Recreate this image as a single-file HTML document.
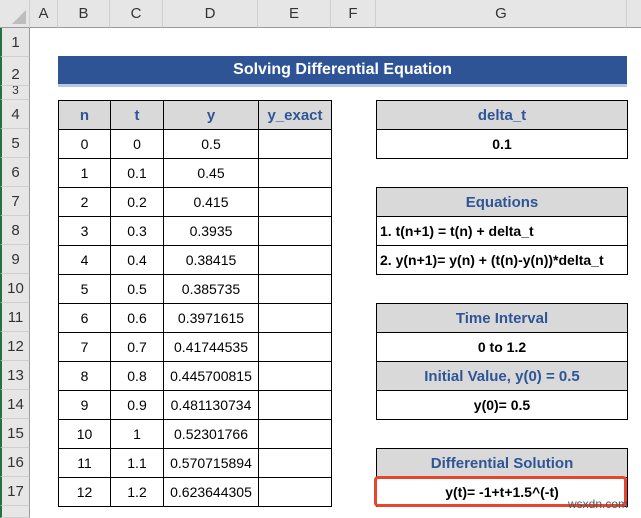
<!DOCTYPE html>
<html><head><style>
body{margin:0;width:641px;height:516px;background:#fff;position:relative;overflow:hidden;font-family:"Liberation Sans",Arial,sans-serif;}
.a{position:absolute;box-sizing:border-box;display:flex;align-items:center;justify-content:center;}
.ch{top:0;height:28px;background:#e6e6e6;border-right:1px solid #cfcfcf;border-bottom:1px solid #9b9b9b;font-size:15px;color:#333;}
.rh{left:0;width:30px;background:#e6e6e6;border-bottom:1px solid #cfcfcf;border-right:1px solid #9b9b9b;font-size:15px;color:#333;border-left:2px solid #217346;}
.c{border:1px solid #000;font-size:14px;color:#000;}
.h{background:#d9d9d9;color:#2f5597;font-weight:bold;font-size:15px;}
.b{font-weight:bold;font-size:14px;}
</style></head><body>
<div class="a ch" style="left:0;width:30px;"><svg width="14" height="14" style="position:absolute;right:3px;bottom:3px"><polygon points="14,0 14,14 0,14" fill="#bdbdbd"/></svg></div>
<div class="a ch" style="left:30px;width:28px">A</div>
<div class="a ch" style="left:58px;width:52px">B</div>
<div class="a ch" style="left:110px;width:53px">C</div>
<div class="a ch" style="left:163px;width:95px">D</div>
<div class="a ch" style="left:258px;width:73px">E</div>
<div class="a ch" style="left:331px;width:45px">F</div>
<div class="a ch" style="left:376px;width:251px">G</div>
<div class="a ch" style="left:627px;width:14px;border-right:none"></div>

<div class="a rh" style="top:28px;height:29px">1</div>
<div class="a rh" style="top:57px;height:29px;align-items:flex-end;padding-bottom:2px">2</div>
<div class="a rh" style="top:86px;height:14px;font-size:12px;overflow:hidden;align-items:flex-start;line-height:8px">3</div>
<div class="a rh" style="top:100px;height:29px">4</div>
<div class="a rh" style="top:129px;height:29px">5</div>
<div class="a rh" style="top:158px;height:29px">6</div>
<div class="a rh" style="top:187px;height:29px">7</div>
<div class="a rh" style="top:216px;height:29px">8</div>
<div class="a rh" style="top:245px;height:29px">9</div>
<div class="a rh" style="top:274px;height:29px">10</div>
<div class="a rh" style="top:303px;height:29px">11</div>
<div class="a rh" style="top:332px;height:29px">12</div>
<div class="a rh" style="top:361px;height:29px">13</div>
<div class="a rh" style="top:390px;height:29px">14</div>
<div class="a rh" style="top:419px;height:29px">15</div>
<div class="a rh" style="top:448px;height:29px">16</div>
<div class="a rh" style="top:477px;height:29px">17</div>
<div class="a rh" style="top:506px;height:12px"></div>

<div class="a" style="left:58px;top:56px;width:569px;height:28px;background:#2f5496;color:#fff;font-weight:bold;font-size:16px">Solving Differential Equation</div>
<div class="a" style="left:58px;top:84px;width:569px;height:3px;background:#b4c7e7"></div>

<div id="t"></div>
<script>
var cols=[[58,52],[110,53],[163,95],[258,73]];
var hd=["n","t","y","y_exact"];
var ys=["0.5","0.45","0.415","0.3935","0.38415","0.385735","0.3971615","0.41744535","0.445700815","0.481130734","0.52301766","0.570715894","0.623644305"];
var ts=["0","0.1","0.2","0.3","0.4","0.5","0.6","0.7","0.8","0.9","1","1.1","1.2"];
var h="";
for(var c=0;c<4;c++){h+='<div class="a c h" style="left:'+cols[c][0]+'px;top:100px;width:'+(cols[c][1]+1)+'px;height:30px">'+hd[c]+'</div>';}
for(var r=0;r<13;r++){var v=[r,ts[r],ys[r],""];for(var c=0;c<4;c++){h+='<div class="a c" style="left:'+cols[c][0]+'px;top:'+(129+29*r)+'px;width:'+(cols[c][1]+1)+'px;height:30px">'+v[c]+'</div>';}}
function cell(t,y,cls,txt,extra){h+='<div class="a c '+cls+'" style="left:376px;top:'+y+'px;width:252px;height:30px;'+(extra||'')+'">'+txt+'</div>';}
cell(0,100,"h","delta_t");cell(0,129,"b","0.1");
cell(0,187,"h","Equations");
cell(0,216,"b","1. t(n+1) = t(n) + delta_t","justify-content:flex-start;padding-left:3px");
cell(0,245,"b","2. y(n+1)= y(n) + (t(n)-y(n))*delta_t","justify-content:flex-start;padding-left:3px");
cell(0,303,"h","Time Interval");cell(0,332,"b","0 to 1.2");
cell(0,361,"h","Initial Value, y(0) = 0.5");cell(0,390,"b","y(0)= 0.5");
cell(0,448,"h","Differential Solution");cell(0,477,"b","y(t)= -1+t+1.5^(-t)");
document.getElementById("t").innerHTML=h;
</script>
<div class="a" style="left:374px;top:476px;width:253px;height:31px;border:3px solid #e8452c;border-radius:4px"></div>
<div class="a" style="left:568px;top:497px;font-size:12px;color:#555">wsxdn.com</div>
</body></html>
